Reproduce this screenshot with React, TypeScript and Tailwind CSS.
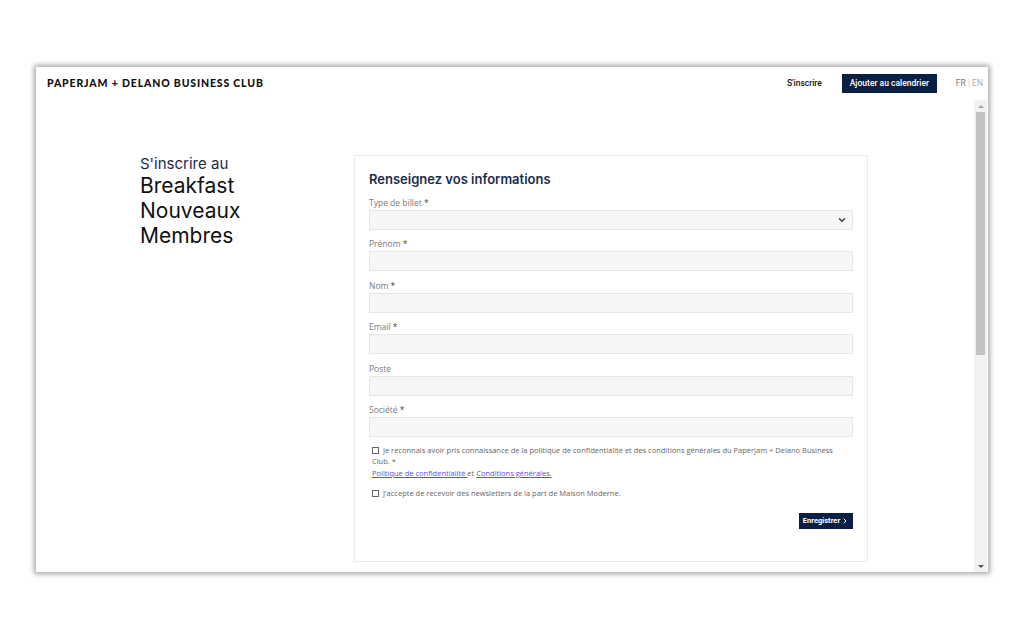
import { ChevronDown, ChevronRight } from "lucide-react";

type Field = { label: string; required?: boolean; select?: boolean };

const FIELDS: Field[] = [
  { label: "Type de billet", required: true, select: true },
  { label: "Prénom", required: true },
  { label: "Nom", required: true },
  { label: "Email", required: true },
  { label: "Poste" },
  { label: "Société", required: true },
];

function FormField({ field }: { field: Field }) {
  return (
    <div className="flex flex-col">
      <label className="mb-[2px] h-[11px] font-['Open_Sans',sans-serif] text-[8.5px] leading-[11px] text-[#7a7a7a]">
        {field.label}
        {field.required && <span className="text-[#444]"> *</span>}
      </label>
      <div className="flex h-[20px] items-center justify-end border border-[#e6e6e6] bg-[#f6f6f6] pr-[5px]">
        {field.select && <ChevronDown className="size-[10px] text-[#333]" strokeWidth={3} />}
      </div>
    </div>
  );
}

export default function App() {
  return (
    <div className="h-[640px] w-[1024px] bg-white pl-[36px] pt-[67px] font-['Roboto','Liberation_Sans',sans-serif]">
      <div className="flex h-[505px] w-[952px] flex-col bg-white shadow-[0_0_5px_2px_rgba(0,0,0,0.35)]">
        <header className="flex h-[33px] shrink-0 items-center pl-[11px] pr-[5px]">
          <p className="font-['Lato','Noto_Sans',sans-serif] text-[10.5px] font-black tracking-[0.08em] text-[#111]">
            PAPERJAM + DELANO BUSINESS CLUB
          </p>
          <div className="ml-auto flex items-center">
            <span className="text-[8.5px] font-medium text-[#111]">S'inscrire</span>
            <span className="ml-[20px] flex h-[19px] w-[95px] items-center justify-center bg-[#0b1f44] text-[8.5px] font-medium text-white">
              Ajouter au calendrier
            </span>
            <span className="ml-[19px] text-[8.5px] text-[#777]">
              FR <span className="text-[#ccc]">|</span> <span className="text-[#aaa]">EN</span>
            </span>
          </div>
        </header>
        <div className="flex min-h-0 flex-1">
          <main className="flex flex-1 pl-[104px] pt-[55px]">
            <div className="w-[214px] font-['Inter','Noto_Sans',sans-serif]">
              <p className="text-[15px] leading-[18px] text-[#1d2b4b]">S'inscrire au</p>
              <p className="text-[21px] leading-[25px] text-[#111]">Breakfast</p>
              <p className="text-[21px] leading-[25px] text-[#111]">Nouveaux</p>
              <p className="text-[21px] leading-[25px] text-[#111]">Membres</p>
            </div>
            <section className="flex h-[407px] w-[514px] flex-col border border-[#ececec] px-[14px] pt-[14px]">
              <h2 className="font-['Inter','Noto_Sans',sans-serif] text-[13px] font-semibold leading-[18px] text-[#1d2b4b]">
                Renseignez vos informations
              </h2>
              <div className="mt-[9px] flex flex-col gap-[8.4px]">
                {FIELDS.map((f) => (
                  <FormField key={f.label} field={f} />
                ))}
              </div>
              <div className="mt-[8px] pl-[3px] pr-[18px] font-['Open_Sans',sans-serif] text-[7.5px] leading-[11.5px] text-[#666]">
                <p>
                  <span className="mr-[2px] inline-block size-[7px] border border-[#666] align-[-1px]" /> Je reconnais avoir pris
                  connaissance de la politique de confidentialité et des conditions générales du Paperjam + Delano Business Club. *
                </p>
                <p>
                  <span className="text-[#5b4fe0] underline">Politique de confidentialité </span> et{" "}
                  <span className="text-[#5b4fe0] underline">Conditions générales.</span>
                </p>
                <p className="mt-[9px]">
                  <span className="mr-[2px] inline-block size-[7px] border border-[#666] align-[-1px]" /> J'accepte de recevoir des
                  newsletters de la part de Maison Moderne.
                </p>
              </div>
              <div className="mt-[13px] flex justify-end">
                <span className="flex h-[16px] w-[54px] items-center justify-center gap-[1px] bg-[#0b1f44] text-[7.5px] font-bold text-white">
                  Enregistrer
                  <ChevronRight className="size-[8px]" strokeWidth={3} />
                </span>
              </div>
            </section>
          </main>
          <div className="mr-[1px] flex w-[13px] shrink-0 flex-col items-center bg-[#f1f1f1]">
            <div className="flex h-[12px] items-center justify-center">
              <div className="h-0 w-0 border-x-[3px] border-b-[3px] border-x-transparent border-b-[#a3a3a3]" />
            </div>
            <div className="h-[243px] w-[9px] bg-[#c1c1c1]" />
            <div className="flex-1" />
            <div className="flex h-[12px] items-center justify-center">
              <div className="h-0 w-0 border-x-[3px] border-t-[3px] border-x-transparent border-t-[#505050]" />
            </div>
          </div>
        </div>
      </div>
    </div>
  );
}
